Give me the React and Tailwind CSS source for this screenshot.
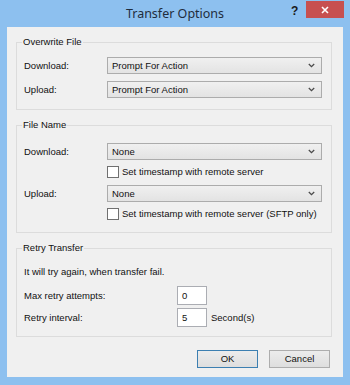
import React from 'react';

const font = { fontFamily: '"Liberation Sans", Arial, sans-serif' };

function Chevron() {
  return (
    <svg width="7" height="5" viewBox="0 0 7 5" className="shrink-0">
      <path d="M0.8 1 L3.5 3.6 L6.2 1" fill="none" stroke="#4a4a4a" strokeWidth="1.3" />
    </svg>
  );
}

function Select({ value }) {
  return (
    <div className="w-[215px] h-[17px] flex items-center justify-between pl-[4px] pr-[6px] border border-[#acacac] bg-gradient-to-b from-[#f0f0f0] to-[#e3e3e3] text-[#111]">
      <span>{value}</span>
      <Chevron />
    </div>
  );
}

function Check({ label }) {
  return (
    <div className="h-[12px] flex items-center gap-[2px] pl-[90px]">
      <div className="w-[12px] h-[12px] border border-[#707070] bg-white shrink-0" />
      <span className="ml-[1px]">{label}</span>
    </div>
  );
}

function Group({ title, className, children }) {
  return (
    <div className={`relative ml-[9px] w-[316px] border border-[#dcdcdc] ${className}`}>
      <span className="absolute -top-[7px] left-[5px] px-[1px] bg-[#f0f0f0] leading-[12px] text-[#111]">{title}</span>
      {children}
    </div>
  );
}

function Row({ label, children, className = '' }) {
  return (
    <div className={`flex items-center pl-[7px] ${className}`}>
      <span className="w-[83px]">{label}</span>
      {children}
    </div>
  );
}

export default function App() {
  return (
    <div className="w-[350px] h-[385px] bg-[#8dc0ef] flex flex-col overflow-hidden" style={font}>
      {/* Title bar */}
      <div className="h-[27px] relative flex items-start justify-center shrink-0">
        <span className="mt-[5px] text-[#1f2d3d]" style={{ fontFamily: '"Noto Sans", "Open Sans", sans-serif', fontSize: '12.5px' }}>
          Transfer Options
        </span>
        <span className="absolute left-[291px] top-[2px] text-[12px] font-bold text-[#1a1a1a]">?</span>
        <div className="absolute left-[306px] top-[1px] w-[38px] h-[17px] bg-[#c75050] flex items-center justify-center">
          <svg width="8" height="8" viewBox="0 0 8 8">
            <path d="M1 1 L7 7 M7 1 L1 7" stroke="#fff" strokeWidth="1.6" />
          </svg>
        </div>
      </div>

      {/* Client area */}
      <div className="mx-[7px] h-[350px] bg-[#f0f0f0] flex flex-col text-[9.5px] text-[#111] leading-[12px]">
        <Group title="Overwrite File" className="mt-[15px] pt-[14px] pb-[11px] flex flex-col gap-[7px]">
          <Row label="Download:"><Select value="Prompt For Action" /></Row>
          <Row label="Upload:"><Select value="Prompt For Action" /></Row>
        </Group>

        <Group title="File Name" className="mt-[15px] pt-[17px] pb-[12px] flex flex-col">
          <Row label="Download:"><Select value="None" /></Row>
          <div className="mt-[6px]"><Check label="Set timestamp with remote server" /></div>
          <Row label="Upload:" className="mt-[7px]"><Select value="None" /></Row>
          <div className="mt-[6px]"><Check label="Set timestamp with remote server (SFTP only)" /></div>
        </Group>

        <Group title="Retry Transfer" className="mt-[15px] pt-[17px] pb-[9px] flex flex-col">
          <div className="pl-[7px] h-[12px] flex items-center">It will try again, when transfer fail.</div>
          <Row label="Max retry attempts:" className="mt-[8px]">
            <div className="ml-[70px] w-[30px] h-[19px] border border-[#abadb3] bg-white flex items-center pl-[4px]">0</div>
          </Row>
          <Row label="Retry interval:" className="mt-[3px]">
            <div className="ml-[70px] w-[30px] h-[19px] border border-[#abadb3] bg-white flex items-center pl-[4px]">5</div>
            <span className="ml-[4px]">Second(s)</span>
          </Row>
        </Group>

        <div className="mt-[13px] flex justify-end gap-[11px] pr-[13px]">
          <button className="w-[61px] h-[18px] border border-[#3c7fb1] bg-gradient-to-b from-[#ececec] to-[#dedede] text-[#111]">OK</button>
          <button className="w-[61px] h-[18px] border border-[#adadad] bg-gradient-to-b from-[#ececec] to-[#dedede] text-[#111]">Cancel</button>
        </div>
      </div>
    </div>
  );
}
